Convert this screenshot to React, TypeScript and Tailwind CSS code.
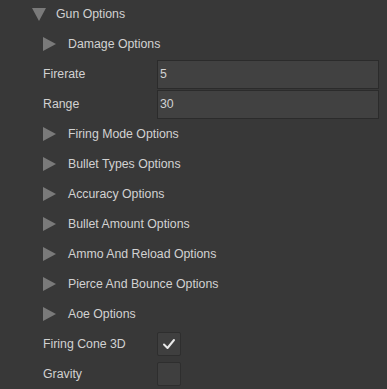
import { ReactNode } from "react";

const TEXT = "text-[12.3px] text-[#d2d2d2]";

const DownArrow = () => (
  <svg width="14" height="13" viewBox="0 0 14 13" className="shrink-0">
    <polygon points="0,0 14,0 7,13" fill="#7a7a7a" />
  </svg>
);

const RightArrow = () => (
  <svg width="13" height="14" viewBox="0 0 13 14" className="shrink-0">
    <polygon points="0,0 13,7 0,14" fill="#7a7a7a" />
  </svg>
);

const Row = ({ children }: { children: ReactNode }) => (
  <div className="flex h-[30px] items-center">{children}</div>
);

const Foldout = ({ label }: { label: string }) => (
  <Row>
    <div className="ml-[43px] flex items-center gap-[12px]">
      <RightArrow />
      <span className={TEXT}>{label}</span>
    </div>
  </Row>
);

const Field = ({ label, value }: { label: string; value: string }) => (
  <Row>
    <span className={`${TEXT} ml-[43px] w-[114px]`}>{label}</span>
    <div className="flex h-[29px] w-[222px] items-center border border-[#2b2b2b] bg-[#414141] pl-[2px]">
      <span className={TEXT}>{value}</span>
    </div>
  </Row>
);

const Toggle = ({ label, checked }: { label: string; checked?: boolean }) => (
  <Row>
    <span className={`${TEXT} ml-[43px] w-[114px]`}>{label}</span>
    <div className="flex h-[24px] w-[24px] items-center justify-center rounded-[2px] border border-[#2e2e2e] bg-[#3f3f3f]">
      {checked && (
        <svg width="14" height="12" viewBox="0 0 14 12">
          <path d="M2 6.5 L5.5 10 L12 2" stroke="#e8e8e8" strokeWidth="2" fill="none" strokeLinecap="round" strokeLinejoin="round" />
        </svg>
      )}
    </div>
  </Row>
);

export default function App() {
  return (
    <div className="h-[389px] w-[387px] overflow-hidden bg-[#383838] font-['Liberation_Sans',Arial,sans-serif]">
      <div className="-mt-[1px] flex flex-col">
        <Row>
          <div className="ml-[32px] flex items-center gap-[10px]">
            <DownArrow />
            <span className={TEXT}>Gun Options</span>
          </div>
        </Row>
        <Foldout label="Damage Options" />
        <Field label="Firerate" value="5" />
        <Field label="Range" value="30" />
        <Foldout label="Firing Mode Options" />
        <Foldout label="Bullet Types Options" />
        <Foldout label="Accuracy Options" />
        <Foldout label="Bullet Amount Options" />
        <Foldout label="Ammo And Reload Options" />
        <Foldout label="Pierce And Bounce Options" />
        <Foldout label="Aoe Options" />
        <Toggle label="Firing Cone 3D" checked />
        <Toggle label="Gravity" />
      </div>
    </div>
  );
}
